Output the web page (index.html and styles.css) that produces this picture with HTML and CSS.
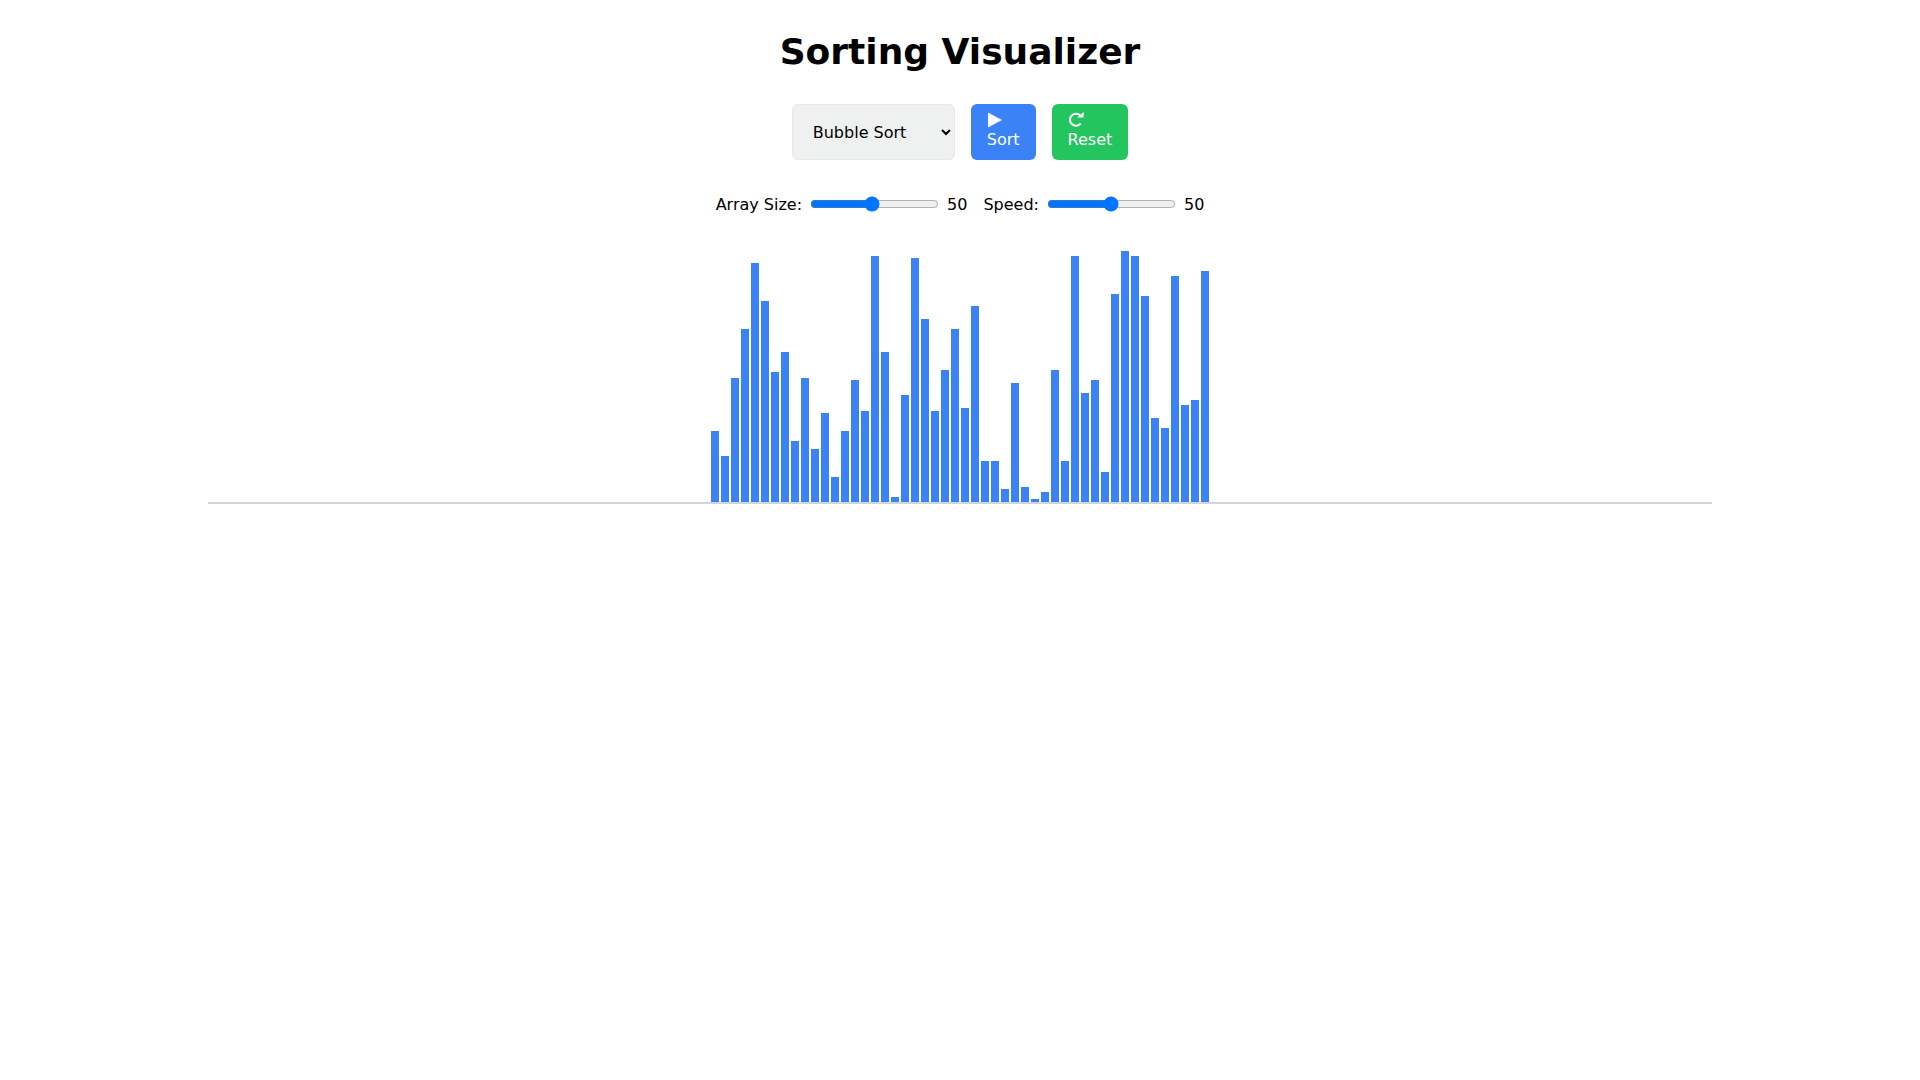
FILE: index.html
```html
<!DOCTYPE html>
<html lang="en">
<head>
    <meta charset="UTF-8">
    <title>Sorting Visualizer</title>
    <link rel="stylesheet" href="styles.css">
</head>
<body>
    <div class="container">
        <h1>Sorting Visualizer</h1>

        <div class="controls">
            <select id="algorithm">
                <option>Bubble Sort</option>
                <option>Selection Sort</option>
                <option>Insertion Sort</option>
                <option>Merge Sort</option>
                <option>Quick Sort</option>
            </select>
            <button class="btn btn-sort">
                <svg class="icon" viewBox="0 0 16 16"><path d="M1 0.5 L15 8 L1 15.5 Z"/></svg>
                Sort
            </button>
            <button class="btn btn-reset">
                <svg class="icon" viewBox="0 0 16 16"><path class="redo-arc" d="M12.6 11.6 A6 6 0 1 1 12.7 4"/><path d="M9.2 5.6 H15.6 V0 Z"/></svg>
                Reset
            </button>
        </div>

        <div class="sliders">
            <label for="size">Array Size:</label>
            <input type="range" id="size" min="5" max="100" value="50">
            <span>50</span>
            <label for="speed">Speed:</label>
            <input type="range" id="speed" min="1" max="100" value="50">
            <span>50</span>
        </div>

        <!-- bars are filled in by script.js -->
        <div id="bars" class="bars"></div>
    </div>

    <script src="script.js"></script>
</body>
</html>
```

FILE: styles.css
```css
* {
    box-sizing: border-box;
}
body {
    font-family: 'DejaVu Sans', sans-serif;
    margin: 0;
    padding: 0;
    background-color: white;
    color: black;
}
.container {
    max-width: 1536px;
    margin: 0 auto;
    padding: 32px 16px;
}
h1 {
    margin: 0 0 32px 0;
    font-size: 36px;
    line-height: 40px;
    font-weight: bold;
    text-align: center;
}
.controls {
    display: flex;
    justify-content: center;
    gap: 16px;
    margin-bottom: 32px;
}
select {
    width: 163px;
    padding: 8px 16px;
    font-family: inherit;
    font-size: 16px;
    color: black;
    background-color: #eff1f1;
    border: 1px solid #e5e7eb;
    border-radius: 6px;
}
.btn {
    display: block;
    height: 56px;
    padding: 8px 16px;
    font-family: inherit;
    font-size: 16px;
    line-height: 24px;
    text-align: left;
    color: white;
    border: none;
    border-radius: 6px;
    cursor: pointer;
}
.btn-sort {
    background-color: #3b82f6;
}
.btn-reset {
    background-color: #22c55e;
}
.icon {
    display: block;
    width: 16px;
    height: 16px;
    fill: white;
}
.redo-arc {
    fill: none;
    stroke: white;
    stroke-width: 2;
}
.sliders {
    display: flex;
    justify-content: center;
    align-items: center;
    gap: 8px;
    height: 24px;
    margin-bottom: 32px;
    font-size: 16px;
}
.sliders input {
    margin: 0;
}
.sliders label:nth-of-type(2) {
    margin-left: 8px;
}
.bars {
    display: flex;
    justify-content: center;
    align-items: flex-end;
    gap: 2px;
    height: 256px;
    border-bottom: 2px solid #d1d5db;
}
.bar {
    width: 8px;
    background-color: #3b82f6;
}
```

FILE: script.js
```js
const heights = [
    71, 46, 124, 173, 239, 201, 130, 150, 61, 124,
    53, 89, 25, 71, 122, 91, 246, 150, 5, 107,
    244, 183, 91, 132, 173, 94, 196, 41, 41, 13,
    119, 15, 3, 10, 132, 41, 246, 109, 122, 30,
    208, 251, 246, 206, 84, 74, 226, 97, 102, 231
];

const barsBox = document.getElementById("bars");
heights.forEach(h => {
    const bar = document.createElement("div");
    bar.className = "bar";
    bar.style.height = h + "px";
    barsBox.appendChild(bar);
});
```
